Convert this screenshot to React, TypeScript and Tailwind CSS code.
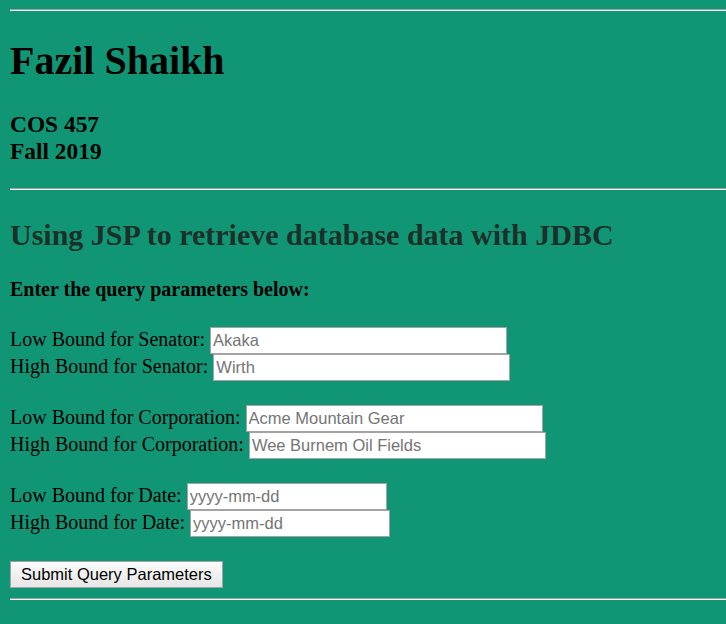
import React from 'react';

const serif = "font-['Liberation_Serif','Times_New_Roman',serif]";
const inputCls =
  "h-[27px] bg-white border border-[#a3a3a3] px-[2px] text-[16.5px] font-['Liberation_Sans',Arial,sans-serif] text-black placeholder:text-[#757575] outline-none align-baseline";

const Rule = ({ className = 'my-[10px]' }: { className?: string }) => (
  <div className={`mr-[-10px] h-[2px] border-t border-t-[#a0a0a0] border-b border-b-[#f2f2f2] ${className}`} />
);

const Field = ({ label, placeholder, width }: { label: string; placeholder: string; width: string }) => (
  <div>
    {label}{' '}
    <input type="text" placeholder={placeholder} className={`${inputCls} ${width}`} />
  </div>
);

const Gap = () => <div className="h-[24px]" />;

const App = () => {
  return (
    <div className={`min-h-[624px] bg-[#119675] text-black text-[20px] leading-[1.15] px-[10px] pt-[9px] pb-px overflow-hidden ${serif}`}>
      <Rule className="mt-0 mb-[10px]" />
      <h1 className="text-[40px] font-bold my-[27px] leading-[1.15]">Fazil Shaikh</h1>
      <h3 className="text-[23.4px] font-bold my-[23px] leading-[1.15]">
        COS 457
        <br />
        Fall 2019
      </h3>
      <Rule />
      <h2 className="text-[30px] font-bold mt-[28px] mb-[25px] leading-[1.15] text-[#1a3029]">
        Using JSP to retrieve database data with JDBC
      </h2>
      <h4 className="text-[20px] font-bold my-[26px] leading-[1.15]">Enter the query parameters below:</h4>
      <form onSubmit={(e) => e.preventDefault()}>
        <Field label="Low Bound for Senator:" placeholder="Akaka" width="w-[297px]" />
        <Field label="High Bound for Senator:" placeholder="Wirth" width="w-[297px]" />
        <Gap />
        <Field label="Low Bound for Corporation:" placeholder="Acme Mountain Gear" width="w-[297px]" />
        <Field label="High Bound for Corporation:" placeholder="Wee Burnem Oil Fields" width="w-[297px]" />
        <Gap />
        <Field label="Low Bound for Date:" placeholder="yyyy-mm-dd" width="w-[200px]" />
        <Field label="High Bound for Date:" placeholder="yyyy-mm-dd" width="w-[200px]" />
        <Gap />
        <div>
          <button
            type="submit"
            className="h-[27px] px-[10px] border border-[#a3a3a3] bg-gradient-to-b from-[#fbfbfb] to-[#e6e6e6] text-[16.5px] text-black font-['Liberation_Sans',Arial,sans-serif] align-baseline"
          >
            Submit Query Parameters
          </button>
        </div>
      </form>
      <Rule />
    </div>
  );
};

export default App;
